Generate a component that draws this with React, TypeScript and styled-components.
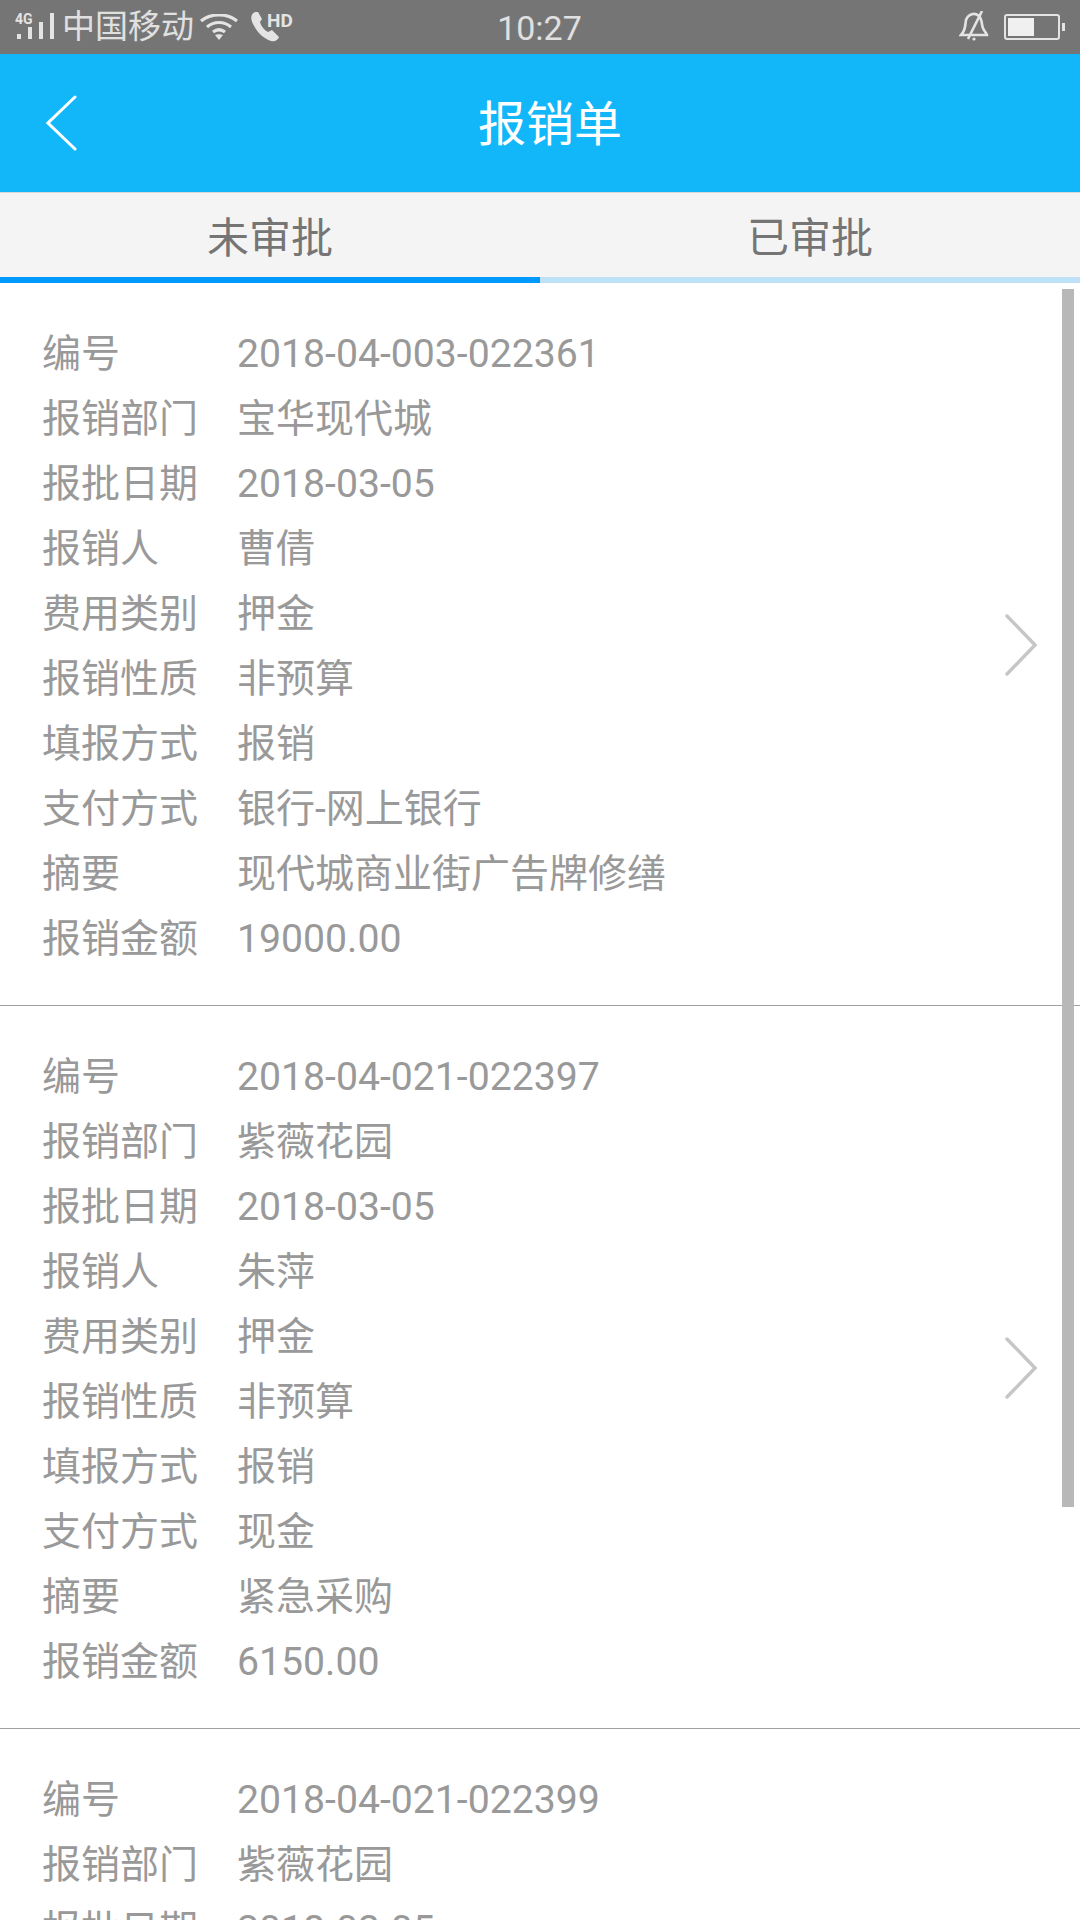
import React from 'react'
import styled, { createGlobalStyle } from 'styled-components'

const claims = [
	{
		id: '2018-04-003-022361',
		dept: '宝华现代城',
		date: '2018-03-05',
		person: '曹倩',
		type: '押金',
		nature: '非预算',
		fill: '报销',
		pay: '银行-网上银行',
		memo: '现代城商业街广告牌修缮',
		amount: '19000.00',
	},
	{
		id: '2018-04-021-022397',
		dept: '紫薇花园',
		date: '2018-03-05',
		person: '朱萍',
		type: '押金',
		nature: '非预算',
		fill: '报销',
		pay: '现金',
		memo: '紧急采购',
		amount: '6150.00',
	},
	{
		id: '2018-04-021-022399',
		dept: '紫薇花园',
		date: '2018-03-05',
		person: '',
		type: '',
		nature: '',
		fill: '',
		pay: '',
		memo: '',
		amount: '',
	},
]

const fields: [string, keyof (typeof claims)[number]][] = [
	['编号', 'id'],
	['报销部门', 'dept'],
	['报批日期', 'date'],
	['报销人', 'person'],
	['费用类别', 'type'],
	['报销性质', 'nature'],
	['填报方式', 'fill'],
	['支付方式', 'pay'],
	['摘要', 'memo'],
	['报销金额', 'amount'],
]

const isNumeric = (text: string) => /^[\d.-]*$/.test(text)

function App() {
	return (
		<>
			<GlobalStyle />
			<Page>
				<StatusBar>
					<StatusLeft>
						<SignalIcon width="40" height="28" viewBox="0 0 40 28">
							<text x="0" y="11" fontSize="14" fontWeight="700" fill="#e4e4e4" fontFamily="Roboto, sans-serif">
								4G
							</text>
							<rect x="2" y="21" width="4" height="5" fill="#e4e4e4" />
							<rect x="13" y="14" width="4" height="12" fill="#e4e4e4" />
							<rect x="24" y="9" width="4" height="17" fill="#e4e4e4" />
							<rect x="35" y="0" width="4" height="26" fill="#e4e4e4" />
						</SignalIcon>
						<Carrier>中国移动</Carrier>
						<WifiIcon width="38" height="26" viewBox="0 0 38 26" fill="none" stroke="#e4e4e4" strokeWidth="3.2">
							<path d="M1 7 C11 -1 27 -1 37 7" />
							<path d="M7 13 C14 7 24 7 31 13" />
							<path d="M13 18 C17 15 21 15 25 18" />
							<path d="M15 21 L19 26 L23 21 C21 20 17 20 15 21 Z" fill="#e4e4e4" stroke="none" />
						</WifiIcon>
						<svg width="44" height="30" viewBox="0 0 44 30">
							<path
								d="M5 0 C1 2 0 6 3 12 C7 20 13 26 21 29 C25 30 28 28 29 25 L22 18 L18 20 C14 18 11 14 10 10 L12 7 L8 0 Z"
								fill="#e4e4e4"
							/>
							<text x="17" y="15" fontSize="19" fontWeight="700" fill="#e4e4e4" fontFamily="Roboto, sans-serif">
								HD
							</text>
						</svg>
					</StatusLeft>
					<Clock>10:27</Clock>
					<StatusRight>
						<svg width="30" height="32" viewBox="0 0 30 32" fill="none" stroke="#e4e4e4" strokeWidth="2.6">
							<path d="M2 24 C7 19 6 14 7 9 C9 3 16 1 20 5 C24 9 22 16 25 19 C26 21 28 23 28 24 Z" />
							<path d="M23 0 L9 28" />
							<circle cx="15" cy="28" r="1.6" fill="#e4e4e4" stroke="none" />
						</svg>
						<Battery>
							<BatteryLevel />
						</Battery>
					</StatusRight>
				</StatusBar>

				<Header>
					<BackButton>
						<svg width="32" height="56" viewBox="0 0 32 56" fill="none" stroke="#fff" strokeWidth="3" strokeLinecap="round">
							<path d="M29 2 L2 28 L29 54" />
						</svg>
					</BackButton>
					<Title>报销单</Title>
				</Header>

				<Tabs>
					<Tab $active>未审批</Tab>
					<Tab>已审批</Tab>
				</Tabs>

				<List>
					{claims.map((claim) => (
						<Card key={claim.id}>
							<Fields>
								{fields.map(([label, key]) => (
									<Row key={label}>
										<Label>{label}</Label>
										<Value $numeric={isNumeric(claim[key])}>{claim[key]}</Value>
									</Row>
								))}
							</Fields>
							<svg width="32" height="62" viewBox="0 0 32 62" fill="none" stroke="#c6c6c6" strokeWidth="3.4" strokeLinecap="round">
								<path d="M2 2 L30 31 L2 60" />
							</svg>
						</Card>
					))}
					<ScrollThumb />
				</List>
			</Page>
		</>
	)
}

const GlobalStyle = createGlobalStyle`
	html, body {
		margin: 0;
		padding: 0;
		background: #fff;
	}
`

const Page = styled.div`
	display: flex;
	flex-direction: column;
	width: 1080px;
	height: 1920px;
	overflow: hidden;
	font-family: Roboto, "Noto Sans CJK SC", sans-serif;
`

const StatusBar = styled.div`
	display: grid;
	grid-template-columns: 1fr auto 1fr;
	align-items: center;
	height: 54px;
	padding: 0 16px 0 15px;
	box-sizing: border-box;
	background-color: #757575;
	color: #e0e0e0;
`

const StatusLeft = styled.div`
	display: flex;
	align-items: center;
`

const SignalIcon = styled.svg`
	margin-right: 7px;
`

const Carrier = styled.span`
	font-size: 33px;
	line-height: 54px;
`

const WifiIcon = styled.svg`
	margin: 0 12px 0 6px;
`

const Clock = styled.span`
	margin-top: 2px;
	font-size: 34px;
`

const StatusRight = styled.div`
	display: flex;
	align-items: center;
	justify-content: flex-end;
	gap: 15px;
`

const Battery = styled.div`
	position: relative;
	width: 56px;
	height: 26px;
	margin-right: 4px;
	padding: 2px;
	box-sizing: border-box;
	border: 2px solid #e4e4e4;
	border-radius: 3px;

	&::after {
		content: '';
		position: absolute;
		top: 7px;
		right: -7px;
		width: 3px;
		height: 8px;
		background-color: #e4e4e4;
	}
`

const BatteryLevel = styled.div`
	width: 26px;
	height: 100%;
	background-color: #f0f0f0;
`

const Header = styled.div`
	display: flex;
	align-items: center;
	height: 138px;
	padding-left: 46px;
	background-color: #12b7f9;
`

const BackButton = styled.div`
	display: flex;
	width: 32px;
`

const Title = styled.div`
	flex: 1;
	padding: 0 58px 6px 0;
	text-align: center;
	font-size: 48px;
	color: #fff;
`

const Tabs = styled.div`
	display: flex;
	height: 91px;
	border-top: 1px solid #d8d8d8;
	box-sizing: border-box;
	background-color: #f4f4f4;
`

const Tab = styled.div<{ $active?: boolean }>`
	display: flex;
	flex: 1;
	align-items: center;
	justify-content: center;
	padding-bottom: 2px;
	border-bottom: 6px solid ${(p) => (p.$active ? '#0099ff' : '#bde2f8')};
	font-size: 42px;
	color: #757575;
`

const List = styled.div`
	position: relative;
	flex: 1;
	overflow: hidden;
`

const Card = styled.div`
	display: flex;
	align-items: center;
	height: 723px;
	padding: 2px 43px 0 42px;
	box-sizing: border-box;
	border-bottom: 1px solid #a0a0a0;
`

const Fields = styled.div`
	display: flex;
	flex: 1;
	flex-direction: column;
`

const Row = styled.div`
	display: flex;
	align-items: center;
	height: 65px;
	font-size: 39px;
	color: #999;
`

const Label = styled.span`
	width: 195px;
	margin-top: -5px;
`

const Value = styled.span<{ $numeric: boolean }>`
	margin-top: ${(p) => (p.$numeric ? '2px' : '-5px')};
	font-size: ${(p) => (p.$numeric ? '39.2px' : '39px')};
`

const ScrollThumb = styled.div`
	position: absolute;
	top: 6px;
	right: 6px;
	width: 12px;
	height: 1218px;
	background-color: #b8b8b8;
`

export default App
